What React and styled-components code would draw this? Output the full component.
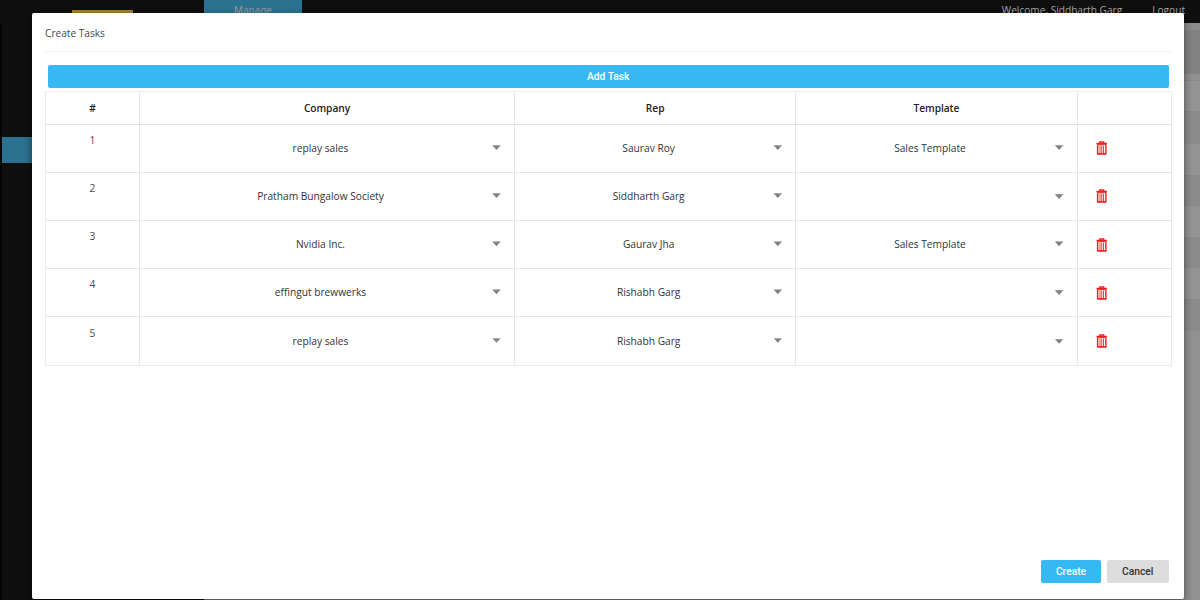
import React from "react";
import styled, { createGlobalStyle } from "styled-components";

const GlobalStyle = createGlobalStyle`
  * { box-sizing: border-box; }
  body { margin: 0; background: #929292; overflow: hidden; font-family: "Open Sans", sans-serif; }
`;

const Page = styled.div`
  position: relative;
  display: flex;
  flex-direction: column;
  width: 1200px;
  height: 600px;
  overflow: hidden;
`;

const TopBar = styled.header`
  display: flex;
  height: 23px;
  background: #0f0f0f;
  color: #a6a6a6;
  font-size: 10.15px;
  line-height: 20px;
`;

const Brand = styled.div`
  width: 204px;
  padding: 10px 0 0 72px;
`;

const LogoBar = styled.div`
  width: 61px;
  height: 4px;
  background: #a47c3c;
`;

const NavTab = styled.div`
  width: 98px;
  padding-top: 1px;
  background: #2b7190;
  color: #8f979b;
  font-family: Roboto, sans-serif;
  font-size: 10.2px;
  letter-spacing: 0.2px;
  text-align: center;
`;

const Account = styled.div`
  display: flex;
  gap: 30px;
  margin-left: auto;
  padding-right: 15px;
`;

const Body = styled.div`
  display: flex;
  flex: 1;
`;

const SideBar = styled.nav`
  width: 204px;
  padding-top: 114px;
  background: #0f0f0f;
  border-left: 2px solid #060606;
`;

const SideItem = styled.div`
  height: 26px;
  background: #2b7190;
`;

const Backdrop = styled.main`
  flex: 1;
  background: #929292;
`;

const Band = styled.div`
  height: ${(p) => p.$height}px;
  background: ${(p) => p.$color};
`;

const Dialog = styled.section`
  position: absolute;
  top: 13px;
  left: 32px;
  display: flex;
  flex-direction: column;
  width: 1152px;
  height: 586px;
  padding: 0 12.5px 16px 13px;
  background: #fff;
  border-radius: 2px;
  box-shadow: 0 4px 8px rgba(0, 0, 0, 0.5);
`;

const Title = styled.h1`
  height: 39px;
  margin: 0 0 13px;
  padding-top: 12px;
  border-bottom: 1.5px solid #f1f2f4;
  color: #484848;
  font-size: 10.15px;
  font-weight: 400;
  line-height: 16px;
`;

const Button = styled.button`
  height: 23px;
  padding: 0;
  border: 0;
  border-radius: 2px;
  background: ${(p) => (p.$plain ? "#dddddd" : "#36b9f2")};
  color: ${(p) => (p.$plain ? "#333" : "#fff")};
  font-family: Roboto, sans-serif;
  font-size: 10.25px;
  font-weight: 500;
  line-height: 23px;
  width: ${(p) => p.$width || "auto"};
`;

const AddButton = styled(Button)`
  flex: none;
  margin: 0 3px 3px;
`;

const Table = styled.div`
  display: grid;
  grid-template-columns: 94px 375px 281.3px 281.3px 1fr;
  grid-template-rows: 32.6px repeat(5, 48.1px);
  border: 1px solid #e8eaed;
  color: #333;
  font-size: 10.2px;
`;

const Cell = styled.div`
  display: flex;
  align-items: center;
  border-right: ${(p) => (p.$last ? "0" : "1px solid #e4e7ea")};
  border-bottom: ${(p) => (p.$bottom ? "0" : "1px solid #e4e8ec")};
`;

const HeadCell = styled(Cell)`
  justify-content: center;
  border-bottom: 1.5px solid #dfe2e6;
  color: #222;
  font-weight: 600;
  letter-spacing: -0.05px;
`;

const NumberCell = styled(Cell)`
  align-items: flex-start;
  justify-content: center;
  padding-top: 7.6px;
  color: #484848;
  line-height: 16px;
`;

const SelectCell = styled(Cell)`
  padding-right: 13px;
`;

const Value = styled.span`
  flex: 1;
  text-align: center;
`;

const Arrow = styled.span`
  width: 9px;
  height: 5px;
  margin-left: -9px;
  background: #828282;
  clip-path: polygon(0 0, 100% 0, 50% 100%);
  transform: translateY(${(p) => (p.$empty ? 0.2 : -0.7)}px);
`;

const ActionCell = styled(Cell)`
  padding: 1px 0 0 18px;
`;

const Footer = styled.footer`
  display: flex;
  justify-content: flex-end;
  gap: 6px;
  margin-top: auto;
  padding-right: 3px;
`;

const TrashIcon = () => (
  <svg width="11.5" height="14.5" viewBox="0 0 12 15" fill="none" stroke="#fb1c20" aria-label="Delete">
    <path d="M.5 2.5h11M4 2V.8h4V2" strokeWidth="1.4" />
    <path d="M1.7 3.3v10.3h8.6V3.3" strokeWidth="1.5" strokeLinejoin="round" />
    <path d="M2 3.5h8M2 13h8" strokeWidth="1" />
    <path d="M4.2 4.5v8M6 4.5v8M7.8 4.5v8" strokeWidth="0.9" />
  </svg>
);

const bands = [
  [7, "#8c8c8c"], [44, "#828282"], [6, "#919191"], [1, "#888a8b"], [30, "#949494"],
  [33, "#8b8b8b"], [31, "#949494"], [31, "#8b8b8b"], [31, "#949494"],
  [31, "#8b8b8b"], [31, "#949494"], [32, "#8b8b8b"],
];

const tasks = [
  ["replay sales", "Saurav Roy", "Sales Template"],
  ["Pratham Bungalow Society", "Siddharth Garg", ""],
  ["Nvidia Inc.", "Gaurav Jha", "Sales Template"],
  ["effingut brewwerks", "Rishabh Garg", ""],
  ["replay sales", "Rishabh Garg", ""],
];

const headings = ["#", "Company", "Rep", "Template", ""];

export default function App() {
  return (
    <Page>
      <GlobalStyle />
      <TopBar>
        <Brand><LogoBar /></Brand>
        <NavTab>Manage</NavTab>
        <Account>
          <span>Welcome, Siddharth Garg</span>
          <span>Logout</span>
        </Account>
      </TopBar>
      <Body>
        <SideBar><SideItem /></SideBar>
        <Backdrop>
          {bands.map(([height, color], i) => <Band key={i} $height={height} $color={color} />)}
        </Backdrop>
      </Body>
      <Dialog>
        <Title>Create Tasks</Title>
        <AddButton>Add Task</AddButton>
        <Table>
          {headings.map((heading, i) => <HeadCell key={i} $last={i === 4}>{heading}</HeadCell>)}
          {tasks.map((fields, row) => {
            const bottom = row === tasks.length - 1;
            return (
              <React.Fragment key={row}>
                <NumberCell $bottom={bottom}>{row + 1}</NumberCell>
                {fields.map((field, i) => (
                  <SelectCell key={i} $bottom={bottom}>
                    <Value>{field}</Value>
                    <Arrow $empty={!field} />
                  </SelectCell>
                ))}
                <ActionCell $last $bottom={bottom}><TrashIcon /></ActionCell>
              </React.Fragment>
            );
          })}
        </Table>
        <Footer>
          <Button $width="60px">Create</Button>
          <Button $plain $width="61.5px">Cancel</Button>
        </Footer>
      </Dialog>
    </Page>
  );
}
